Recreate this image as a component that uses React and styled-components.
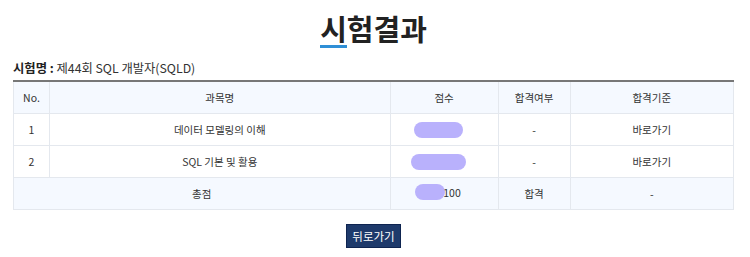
import React from "react";
import styled, { createGlobalStyle } from "styled-components";

const Global = createGlobalStyle`
  html, body { margin: 0; padding: 0; background: #fff; }
  body { font-family: "Noto Sans CJK KR", "Noto Sans", sans-serif; color: #333; }
`;

const Page = styled.div`
  width: 721px;
  padding: 0 0 0 13px;
`;

const TitleWrap = styled.div`
  display: flex;
  justify-content: center;
  padding-top: 10px;
  height: 42px;
`;

const Title = styled.h1`
  margin: 0;
  font-size: 29px;
  line-height: 36px;
  font-weight: 700;
  color: #222;
  letter-spacing: 0px;
`;

const Accent = styled.span`
  display: inline-block;
  line-height: 34px;
  border-bottom: 3px solid #2f8fd6;
`;

const ExamName = styled.div`
  margin-top: 7px;
  font-size: 12.3px;
  line-height: 18px;
  color: #333;
  b { font-weight: 700; color: #222; }
`;

const Table = styled.table`
  width: 100%;
  margin-top: 3px;
  border-collapse: collapse;
  border-top: 2px solid #777;
  table-layout: fixed;
  font-size: 10.5px;
  color: #333;
`;

const Th = styled.th`
  height: 31px;
  padding: 0;
  font-weight: 400;
  background: #f5f9ff;
  border: 1px solid #e4e8ee;
  border-top: none;
  text-align: center;
`;

const Td = styled.td`
  height: 31px;
  padding: 0;
  border: 1px solid #e4e8ee;
  text-align: center;
  background: ${(p) => (p.$total ? "#f5f9ff" : "#fff")};
`;

const Blur = styled.span`
  display: inline-block;
  vertical-align: middle;
  width: ${(p) => p.$w}px;
  height: 16px;
  border-radius: 8px;
  background: #b9b1fc;
  margin-left: ${(p) => p.$ml || 0}px;
`;

const Score = styled.span`
  display: inline-flex;
  align-items: center;
  margin-left: -12px;
  span + span { margin-left: -2px; }
`;

const Footer = styled.div`
  display: flex;
  justify-content: center;
  margin-top: 14px;
`;

const BackButton = styled.button`
  height: 24px;
  padding: 0 5px;
  background: #1e3a6b;
  border: 1px solid #0e2450;
  color: #fff;
  font-family: inherit;
  font-size: 11.5px;
  cursor: pointer;
`;

const rows = [
  { no: 1, name: "데이터 모델링의 이해", w: 49 },
  { no: 2, name: "SQL 기본 및 활용", w: 55 },
];

export default function App() {
  return (
    <>
      <Global />
      <Page>
        <TitleWrap>
          <Title>
            <Accent>시</Accent>험결과
          </Title>
        </TitleWrap>
        <ExamName>
          <b>시험명 :</b> 제44회 SQL 개발자(SQLD)
        </ExamName>
        <Table>
          <colgroup>
            <col style={{ width: "5%" }} />
            <col style={{ width: "47.3%" }} />
            <col style={{ width: "15%" }} />
            <col style={{ width: "10%" }} />
            <col />
          </colgroup>
          <thead>
            <tr>
              <Th>No.</Th>
              <Th>과목명</Th>
              <Th>점수</Th>
              <Th>합격여부</Th>
              <Th>합격기준</Th>
            </tr>
          </thead>
          <tbody>
            {rows.map((r) => (
              <tr key={r.no}>
                <Td>{r.no}</Td>
                <Td>{r.name}</Td>
                <Td>
                  <Blur $w={r.w} $ml={-11} />
                </Td>
                <Td>-</Td>
                <Td>바로가기</Td>
              </tr>
            ))}
            <tr>
              <Td $total colSpan={2}>총점</Td>
              <Td $total>
                <Score>
                  <Blur $w={30} />
                  <span>100</span>
                </Score>
              </Td>
              <Td $total>합격</Td>
              <Td $total>-</Td>
            </tr>
          </tbody>
        </Table>
        <Footer>
          <BackButton>뒤로가기</BackButton>
        </Footer>
      </Page>
    </>
  );
}
